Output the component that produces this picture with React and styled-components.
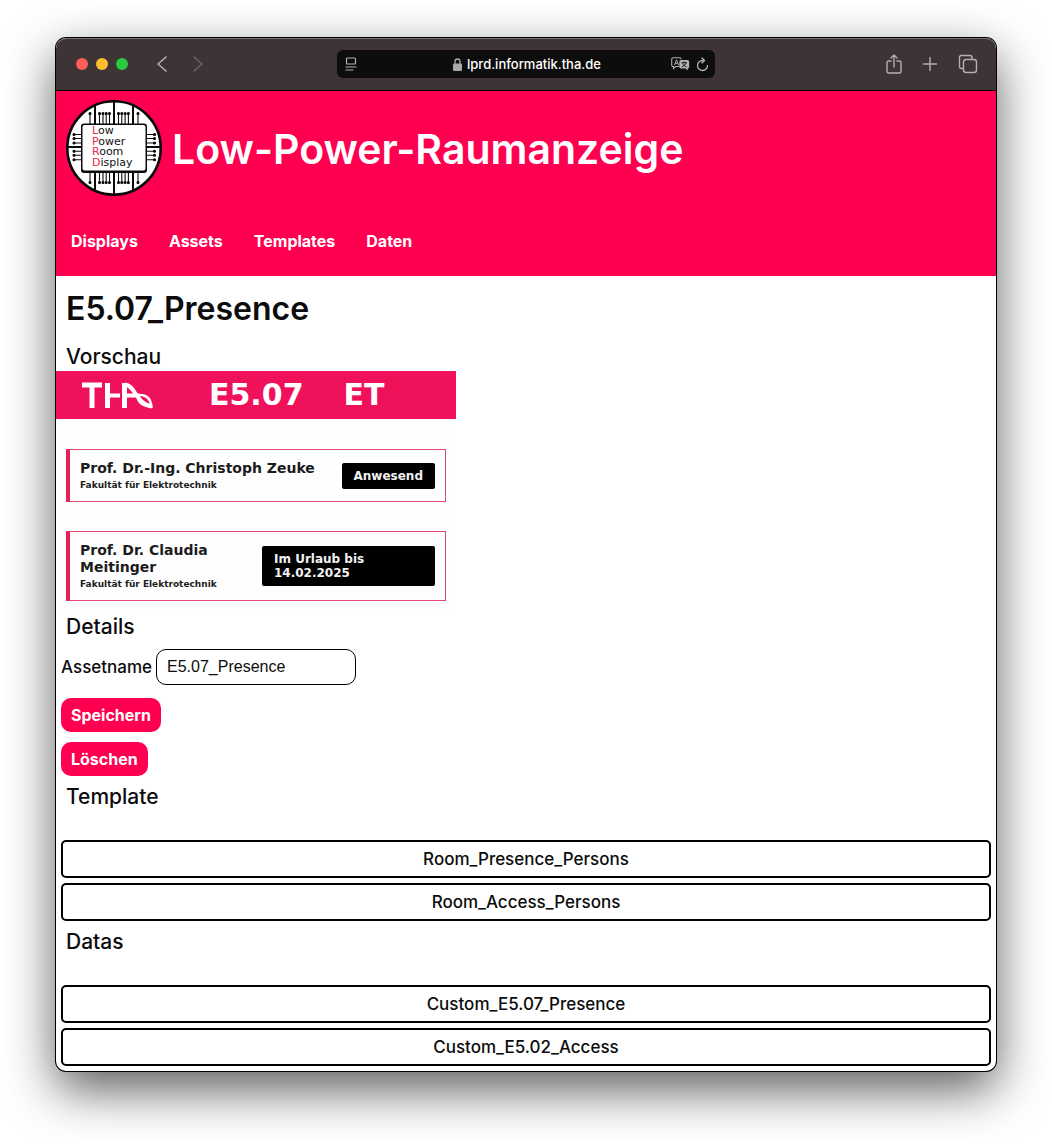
import React, { useState } from "react";
import styled, { createGlobalStyle } from "styled-components";

const pink = "#ff0050";
const sans = `Inter, "Liberation Sans", sans-serif`;
const signage = `"DejaVu Sans", sans-serif`;

const GlobalStyle = createGlobalStyle`
  *, *::before, *::after { box-sizing: border-box; }
  body {
    margin: 0;
    background: #fff;
    color: #0c0c0c;
    font-family: ${sans};
  }
  h1, h2, h3, p { margin: 0; }
`;

const Desktop = styled.div`
  padding: 38px 56px 73px;
`;

const BrowserWindow = styled.div`
  border-radius: 10px;
  overflow: hidden;
  background: #fff;
  box-shadow: 0 0 0 1px #000, 0 18px 50px rgba(0, 0, 0, 0.65);
`;

const Toolbar = styled.div`
  display: grid;
  grid-template-columns: 1fr minmax(0, 378px) 1fr;
  align-items: center;
  height: 53px;
  background: #3e3435;
  border-bottom: 1px solid #000;
  border-radius: 10px 10px 0 0;
  box-shadow: inset 0 1px 0 #777072;
`;

const ToolGroup = styled.div`
  display: flex;
  align-items: center;
  justify-content: ${(p) => (p.$end ? "flex-end" : "flex-start")};
  gap: ${(p) => p.$gap}px;
  padding: ${(p) => (p.$end ? "0 18px 0 0" : "0 0 0 20px")};
`;

const Lights = styled.div`
  display: flex;
  gap: 8px;
  margin-right: 4px;
`;

const Light = styled.button`
  width: 12px;
  height: 12px;
  padding: 0;
  border: 0;
  border-radius: 50%;
  background: ${(p) => p.$color};
`;

const ToolButton = styled.button`
  display: flex;
  padding: 0;
  border: 0;
  background: none;
  color: ${(p) => (p.$dim ? "#6a6162" : "#b4afb0")};
`;

const AddressBar = styled.div`
  display: grid;
  grid-template-columns: 1fr auto 1fr;
  align-items: center;
  height: 28px;
  padding: 0 6px 0 8px;
  border-radius: 6px;
  background: #0d0d0d;
`;

const AddressCenter = styled.label`
  display: flex;
  align-items: center;
  gap: 5px;
  color: #a8a8a8;
`;

const AddressInput = styled.input`
  field-sizing: content;
  padding: 0;
  border: 0;
  background: none;
  color: #fff;
  font: 500 13px/20px ${sans};
`;

const AddressActions = styled.div`
  display: flex;
  align-items: center;
  justify-content: flex-end;
  gap: 6px;
`;

const Header = styled.header`
  padding: 9px 10px 18px;
  background: ${pink};
  color: #fff;
`;

const Brand = styled.div`
  display: flex;
  align-items: center;
  gap: 10px;
`;

const SiteTitle = styled.h1`
  padding-top: 2px;
  font-size: 41px;
  line-height: 48px;
  font-weight: 600;
`;

const Nav = styled.nav`
  display: flex;
  gap: 31px;
  padding: 28px 5px 0;
`;

const NavLink = styled.a`
  color: #fff;
  font-size: 16px;
  line-height: 34px;
  font-weight: 700;
  text-decoration: none;
`;

const PageTitle = styled.h2`
  padding: 10px 10px 0;
  font-size: 32px;
  line-height: 46px;
  font-weight: 600;
`;

const SectionTitle = styled.h3`
  padding: 0 10px;
  font-size: 21px;
  line-height: 30px;
  font-weight: 500;
  margin: ${(p) => p.$space || "0"};
`;

const Preview = styled.section`
  max-width: 400px;
  background: #fefefe;
  font-family: ${signage};
  font-weight: 700;
`;

const PreviewHead = styled.div`
  display: flex;
  align-items: center;
  height: 48px;
  padding-left: 25px;
  background: #ef125b;
  color: #fff;
  font-size: 30px;
  line-height: 36px;
`;

const RoomNumber = styled.span`
  margin: 0 40px 0 52px;
`;

const Persons = styled.div`
  display: flex;
  flex-direction: column;
  gap: 29px;
  padding: 30px 10px 11px;
`;

const PersonCard = styled.article`
  display: flex;
  align-items: center;
  justify-content: space-between;
  padding: 10px;
  border: 1px solid #e0476f;
  border-left: 4px solid #e81e56;
`;

const PersonText = styled.div`
  max-width: ${(p) => (p.$wide ? "none" : "160px")};
  color: #1c1c1c;
`;

const PersonName = styled.p`
  font-size: 14px;
  line-height: 17px;
`;

const Faculty = styled.p`
  padding-top: 3px;
  font-size: 9px;
  line-height: 11px;
  white-space: nowrap;
`;

const Status = styled.p`
  width: ${(p) => (p.$wide ? "173px" : "auto")};
  padding: 6px 12px;
  border-radius: 2px;
  background: #000;
  color: #f2f2f2;
  font-size: 12px;
  line-height: 14px;
`;

const Form = styled.form`
  display: flex;
  flex-direction: column;
  align-items: flex-start;
  gap: 10px;
  padding: 0 5px;
`;

const Field = styled.div`
  display: flex;
  align-items: center;
  gap: 4px;
  padding-bottom: 3px;
`;

const FieldLabel = styled.label`
  font-size: 17px;
  line-height: 24px;
  font-weight: 500;
`;

const TextInput = styled.input`
  width: 200px;
  height: 36px;
  padding: 0 10px;
  border: 1px solid #000;
  border-radius: 10px;
  background: #fff;
  color: #0c0c0c;
  font: 16px/24px "Liberation Sans", Arial, sans-serif;
`;

const ActionButton = styled.button`
  height: 34px;
  padding: 0 10px;
  border: 0;
  border-radius: 10px;
  background: ${pink};
  color: #fff;
  font: 700 16px/24px ${sans};
`;

const Options = styled.div`
  display: flex;
  flex-direction: column;
  gap: 5px;
  padding: 28px 5px 5px;
`;

const OptionButton = styled.button`
  height: 38px;
  border: 2px solid #000;
  border-radius: 5px;
  background: #fff;
  color: #0c0c0c;
  font: 500 17px/24px ${sans};
`;

const Stroke = ({ w, h, width = 1.4, children }) => (
  <svg width={w} height={h} viewBox={`0 0 ${w} ${h}`} fill="none" stroke="currentColor" strokeWidth={width} strokeLinecap="round" strokeLinejoin="round" aria-hidden="true">
    {children}
  </svg>
);

const topPins = [24, 33.5, 37, 40.2, 43.5, 52.5, 55.8, 59.1, 62.4, 72];
const sidePins = [34.5, 38.5, 43, 51.3, 55.3, 59.7];
const words = ["Low", "Power", "Room", "Display"];

const ChipLogo = () => (
  <svg width="96" height="96" viewBox="0 0 96 96" role="img" aria-label="Low Power Room Display">
    <circle cx="48" cy="48" r="46.7" fill="#fff" stroke="#0a0a0a" strokeWidth="2.6" />
    <path d="M29 5v86M48 1v94M67 5v86M1 47h94" stroke="#0a0a0a" strokeWidth="2" />
    <g stroke="#0a0a0a" strokeWidth="1.1" fill="#0a0a0a">
      {topPins.map((x) => (
        <g key={x}>
          <path d={`M${x} 13.5V82.5`} />
          <circle cx={x} cy="13.5" r="1" />
          <circle cx={x} cy="82.5" r="1" />
        </g>
      ))}
      {sidePins.map((y) => (
        <g key={y}>
          <path d={`M8 ${y}H88.5`} />
          <circle cx="8" cy={y} r="1" />
          <circle cx="88.5" cy={y} r="1" />
        </g>
      ))}
    </g>
    <rect x="15" y="23.5" width="66" height="49.5" rx="3" fill="#0a0a0a" />
    <rect x="16.5" y="25" width="63" height="45.5" rx="2" fill="#fff" />
    <g fontFamily="'DejaVu Sans', sans-serif" fontSize="11" fill="#111">
      {words.map((word, i) => (
        <text key={word} x="26" y={34 + i * 10.7}>
          <tspan fill="#e8294f">{word[0]}</tspan>
          {word.slice(1)}
        </text>
      ))}
    </g>
  </svg>
);

const ThaMark = () => (
  <svg width="76" height="28" viewBox="0 0 76 28" fill="none" stroke="#fff" role="img" aria-label="THA">
    <path d="M1 4H21M11 4V27M26.5 2V27M43.5 2V27" strokeWidth="5" />
    <path d="M26 14.500H39M43 14.500H58" strokeWidth="4" />
    <path d="M44 3.500C54 4 55 23 71 25.500" strokeWidth="4" />
    <path d="M56 14C66 13 70 18 70.500 27" strokeWidth="2.500" />
    <path d="M56 15C57 21 61 25.500 71 25.500" strokeWidth="2" />
  </svg>
);

export default function App() {
  const [name, setName] = useState("E5.07_Presence");
  return (
    <>
      <GlobalStyle />
      <Desktop>
        <BrowserWindow>
          <Toolbar>
            <ToolGroup $gap={24}>
              <Lights>
                <Light $color="#ff5f57" aria-label="Close" />
                <Light $color="#febc2e" aria-label="Minimise" />
                <Light $color="#28c840" aria-label="Zoom" />
              </Lights>
              <ToolButton aria-label="Back">
                <Stroke w={12} h={16} width={1.6}><path d="M10 1 2 8l8 7" /></Stroke>
              </ToolButton>
              <ToolButton $dim aria-label="Forward">
                <Stroke w={12} h={16} width={1.6}><path d="M2 1 10 8l-8 7" /></Stroke>
              </ToolButton>
            </ToolGroup>
            <AddressBar>
              <ToolButton aria-label="Page menu">
                <Stroke w={12} h={14} width={1.2}>
                  <rect x="1.5" y="1" width="9" height="6" rx="1" />
                  <path d="M1 10h10M1 13h7" />
                </Stroke>
              </ToolButton>
              <AddressCenter>
                <svg width="9" height="13" viewBox="0 0 9 13" aria-hidden="true">
                  <rect y="5.5" width="9" height="7.5" rx="1.3" fill="currentColor" />
                  <path d="M2 6V3.5a2.5 2.5 0 0 1 5 0V6" fill="none" stroke="currentColor" strokeWidth="1.3" />
                </svg>
                <AddressInput aria-label="Address" defaultValue="lprd.informatik.tha.de" />
              </AddressCenter>
              <AddressActions>
                <ToolButton aria-label="Translate">
                  <svg width="19" height="14" viewBox="0 0 19 14" aria-hidden="true">
                    <path d="M8 9.500H4.500L2.500 11.500V9.500C1.300 9.500.7 8.800.7 8V2.500C.7 1.500 1.300.8 2.300.8h6.200c1 0 1.700.7 1.700 1.500" fill="none" stroke="currentColor" strokeWidth="1.1" />
                    <path d="M3.500 8 5.500 2.800 7.500 8M4.200 6.300h2.600" fill="none" stroke="currentColor" strokeWidth="1" />
                    <path d="M10 3h6.500A1.700 1.700 0 0 1 18.200 4.700v5a1.700 1.700 0 0 1-1.400 1.700V13.500L14.500 11.500H10A1.700 1.700 0 0 1 8.300 9.800V4.700A1.700 1.700 0 0 1 10 3Z" fill="currentColor" />
                    <path d="M10.500 5.700h5.500M13.200 4.500v1.200M11.500 6c.6 1.700 2 3 4 3.800M15 6c-.6 1.700-2 3-4 3.800" fill="none" stroke="#0d0d0d" strokeWidth=".9" />
                  </svg>
                </ToolButton>
                <ToolButton aria-label="Reload">
                  <Stroke w={13} h={15} width={1.3}>
                    <path d="M11.500 8.500A5 5 0 1 1 6.500 3.500H8M6 1l2.500 2.500L6 6" />
                  </Stroke>
                </ToolButton>
              </AddressActions>
            </AddressBar>
            <ToolGroup $end $gap={20}>
              <ToolButton aria-label="Share">
                <Stroke w={16} h={20}>
                  <path d="M5 7H3Q1 7 1 9v8q0 2 2 2h10q2 0 2-2V9q0-2-2-2h-2M8 13V1M5 4l3-3 3 3" />
                </Stroke>
              </ToolButton>
              <ToolButton aria-label="New tab">
                <Stroke w={16} h={16}><path d="M8 1.500v13M1.500 8h13" /></Stroke>
              </ToolButton>
              <ToolButton aria-label="Tabs">
                <Stroke w={20} h={20}>
                  <rect x="5.5" y="5.5" width="13" height="13" rx="2.5" />
                  <path d="M5 14.500H3.500q-2 0-2-2v-9q0-2 2-2h8.500q2 0 2 2V5" />
                </Stroke>
              </ToolButton>
            </ToolGroup>
          </Toolbar>

          <Header>
            <Brand>
              <ChipLogo />
              <SiteTitle>Low-Power-Raumanzeige</SiteTitle>
            </Brand>
            <Nav>
              {["Displays", "Assets", "Templates", "Daten"].map((item) => (
                <NavLink key={item} href={`#${item.toLowerCase()}`}>{item}</NavLink>
              ))}
            </Nav>
          </Header>

          <main>
            <PageTitle>E5.07_Presence</PageTitle>
            <SectionTitle $space="10px 0 -1px">Vorschau</SectionTitle>
            <Preview>
              <PreviewHead>
                <ThaMark />
                <RoomNumber>E5.07</RoomNumber>
                <span>ET</span>
              </PreviewHead>
              <Persons>
                <PersonCard>
                  <PersonText $wide>
                    <PersonName>Prof. Dr.-Ing. Christoph Zeuke</PersonName>
                    <Faculty>Fakultät für Elektrotechnik</Faculty>
                  </PersonText>
                  <Status>Anwesend</Status>
                </PersonCard>
                <PersonCard>
                  <PersonText>
                    <PersonName>Prof. Dr. Claudia Meitinger</PersonName>
                    <Faculty>Fakultät für Elektrotechnik</Faculty>
                  </PersonText>
                  <Status $wide>Im Urlaub bis 14.02.2025</Status>
                </PersonCard>
              </Persons>
            </Preview>

            <SectionTitle $space="0 0 7px">Details</SectionTitle>
            <Form onSubmit={(e) => e.preventDefault()}>
              <Field>
                <FieldLabel htmlFor="assetname">Assetname</FieldLabel>
                <TextInput id="assetname" value={name} onChange={(e) => setName(e.target.value)} />
              </Field>
              <ActionButton type="submit">Speichern</ActionButton>
              <ActionButton type="button">Löschen</ActionButton>
            </Form>

            <SectionTitle $space="6px 0 0">Template</SectionTitle>
            <Options>
              <OptionButton>Room_Presence_Persons</OptionButton>
              <OptionButton>Room_Access_Persons</OptionButton>
            </Options>
            <SectionTitle $space="1px 0 0">Datas</SectionTitle>
            <Options>
              <OptionButton>Custom_E5.07_Presence</OptionButton>
              <OptionButton>Custom_E5.02_Access</OptionButton>
            </Options>
          </main>
        </BrowserWindow>
      </Desktop>
    </>
  );
}
